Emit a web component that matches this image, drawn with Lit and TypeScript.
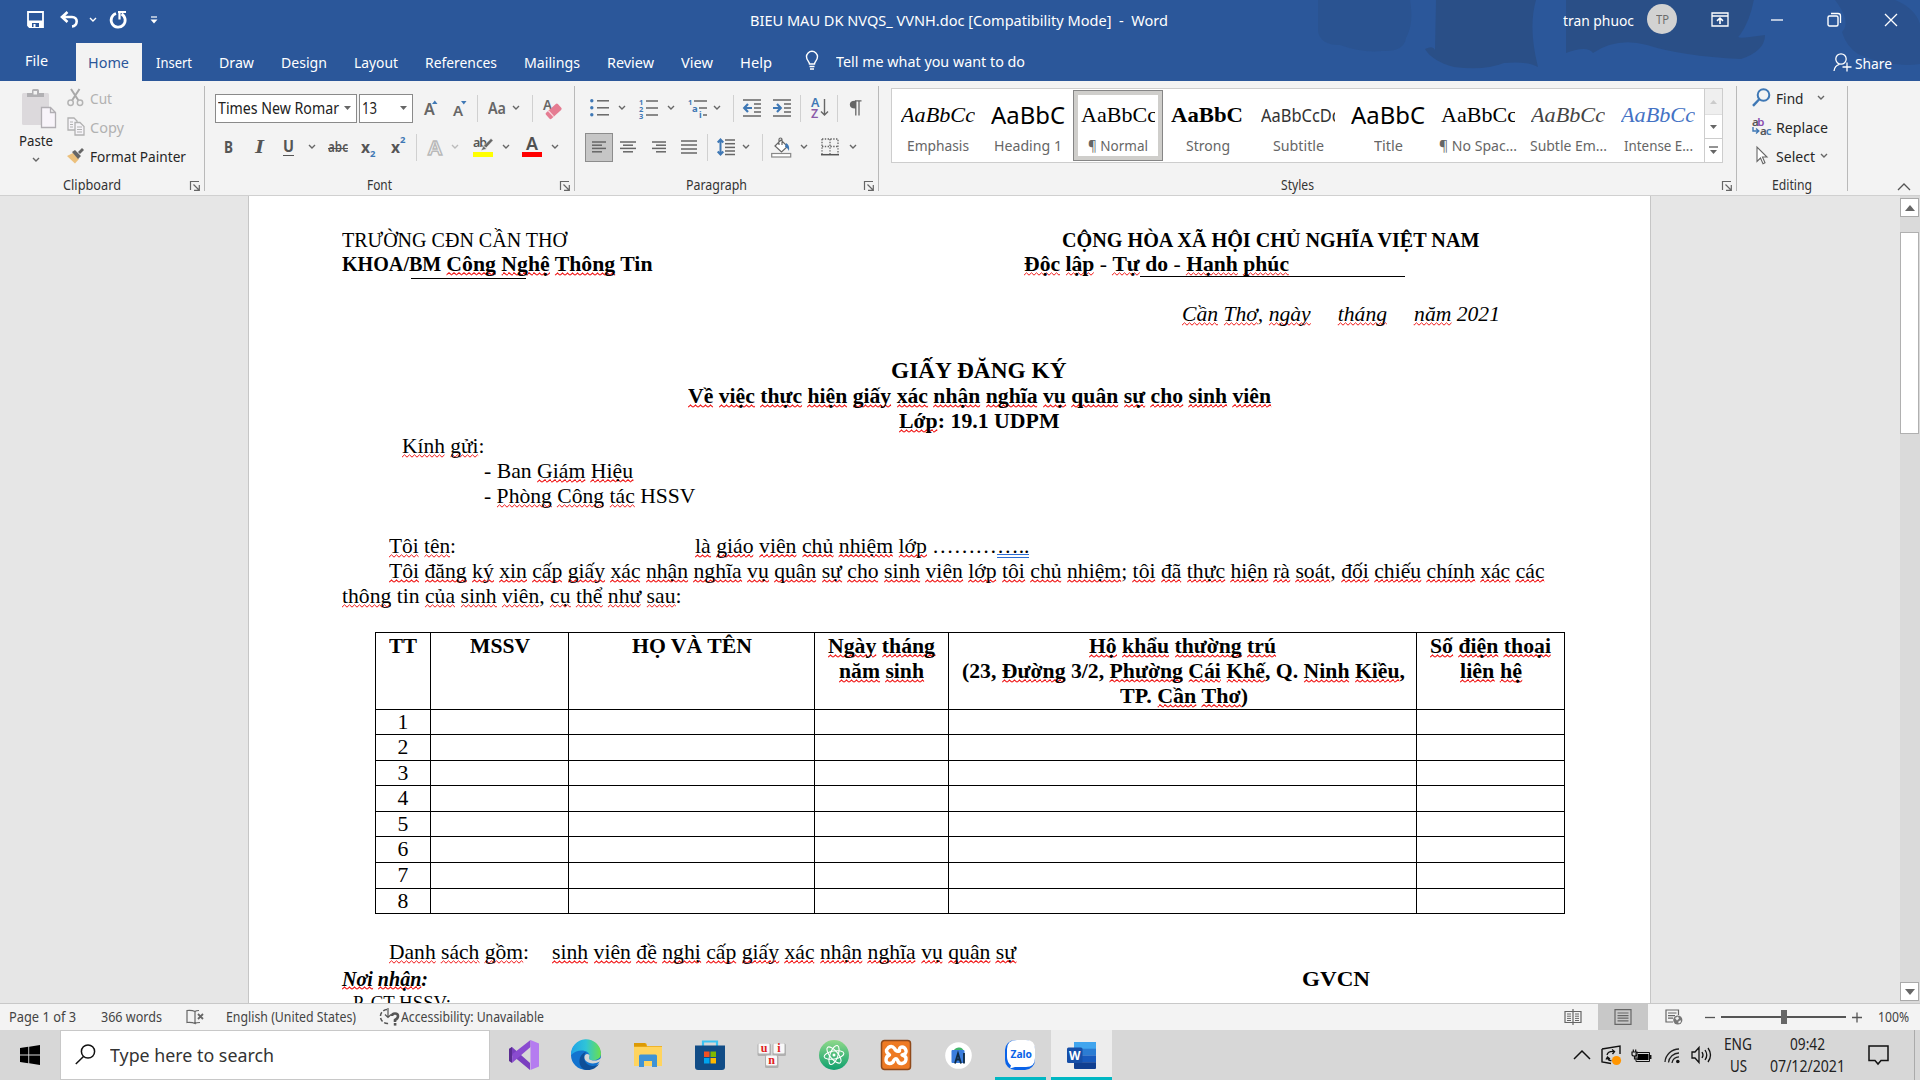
import { LitElement, html, css, svg } from "lit";
import { customElement, property, query } from "lit/decorators.js";

/** Text that is condensed or expanded horizontally to an exact width. */
@customElement("fit-text")
class FitText extends LitElement {
  @property({ type: Number }) w = 0;
  @query("span") inner!: HTMLSpanElement;
  static styles = css`
    :host { display: inline-block; white-space: pre; flex: none; }
    span { display: inline-block; transform-origin: 0 50%; white-space: pre; }
  `;
  updated() {
    requestAnimationFrame(() => {
      const s = this.inner;
      s.style.transform = "none";
      this.style.width = "auto";
      const natural = s.offsetWidth ? s.getBoundingClientRect().width : 0;
      this.style.width = this.w + "px";
      if (natural) s.style.transform = `scaleX(${this.w / natural})`;
    });
  }
  render() {
    return html`<span><slot></slot></span>`;
  }
}

const t = (w: number, content: unknown, cls = "") => html`<fit-text class=${cls} .w=${w}>${content}</fit-text>`;

/** Words in [brackets] get the red spelling squiggle. */
const sq = (s: string) =>
  s.split(/(\[[^\]]*\])/).map((p) => (p.startsWith("[") ? html`<span class="sp">${p.slice(1, -1)}</span>` : p));

const icon = (w: number, h: number, body: unknown, cls = "") =>
  html`<svg class=${cls} width=${w} height=${h} viewBox="0 0 ${w} ${h}" fill="none">${body}</svg>`;

const chev = (cls = "chev") => icon(8, 6, svg`<path d="M1 1l3 3 3-3" stroke="currentColor" stroke-width="1.4"/>`, cls);
const sep = html`<i class="sep"></i>`;
const tri = icon(7, 4, svg`<path d="M0 0h7l-3.500 4z" fill="#666"/>`);
const launcher = icon(10, 10, svg`<path d="M.5 9V.5H9M3.500 3.500l5 5M9.300 4v5.300H4" stroke="#666" stroke-width="1.200"/>`, "launch");

const lines = (rows: number[][]) => rows.map(([x1, x2, y]) => svg`<path d="M${x1} ${y}H${x2}" stroke="#666" stroke-width="1.500"/>`);

const I = {
  save: icon(17, 17, svg`<path d="M1 1h15v15H2.500L1 14.500z" stroke="#fff" stroke-width="1.800"/><path d="M1 9.500h15V16H1z" fill="#fff"/><path d="M5 12h7v4H5z" fill="#2b579a"/><path d="M6.500 13h2v3h-2z" fill="#fff"/>`),
  undo: icon(19, 17, svg`<path d="M7.500 1L2 6l5.500 5M2.500 6H12c6.500 0 6 9 0 9.500" stroke="#fff" stroke-width="2.600"/>`),
  redo: icon(18, 18, svg`<path d="M6 2.500A7 7 0 1 0 11.500 3" stroke="#fff" stroke-width="2.800"/><path d="M8 1h8M9.500 1v7.500" stroke="#fff" stroke-width="2.200"/>`),
  custom: icon(8, 8, svg`<path d="M1 1h6" stroke="#fff" stroke-width="1.200"/><path d="M0.500 3.500h7L4 7.500z" fill="#fff"/>`),
  ribbon: icon(18, 15, svg`<path d="M1 1h16v13H1zM1 4h16" stroke="#fff" stroke-width="1.300"/><path d="M9 12V6M6 8.800L9 6l3 2.800" stroke="#fff" stroke-width="1.600"/>`),
  min: icon(14, 14, svg`<path d="M1 7h12" stroke="#fff" stroke-width="1.300"/>`),
  restore: icon(15, 15, svg`<rect x="1" y="4" width="10" height="10" rx="1.500" stroke="#fff" stroke-width="1.400"/><path d="M4 1.500h7q2.500 0 2.500 2.500v7" stroke="#fff" stroke-width="1.300"/>`),
  close: icon(14, 14, svg`<path d="M1 1l12 12M13 1L1 13" stroke="#fff" stroke-width="1.300"/>`),
  share: icon(19, 19, svg`<circle cx="8" cy="6" r="5.200" stroke="#fff" stroke-width="1.300"/><path d="M1 18c.5-4 2.500-6 5.500-6.700M14 9.500v9M9.500 14h9" stroke="#fff" stroke-width="1.300"/>`),
  bulb: icon(14, 20, svg`<path d="M4.500 13c0-2.500-3-3.500-3-7.200a5.500 5.500 0 0 1 11 0C12.500 9.500 9.500 10.500 9.500 13zM4.500 15.500h5M5 18h4" stroke="#fff" stroke-width="1.400"/>`),
  paste: icon(36, 40, svg`<rect x="1" y="4" width="27" height="32" rx="1.500" fill="#dcd9dc"/><path d="M6 8V4h5V1.500Q11 0 12.500 0h4Q18 0 18 1.500V4h5v4z" fill="#b1b0b3"/><rect x="12.500" y="2" width="3.500" height="3.500" fill="#f3f3f3"/><path d="M20.500 18.500h9l5 5v15h-14zM29.500 18.500v5h5" fill="#f8f4fa" stroke="#b1aeb3" stroke-width="1.300"/>`),
  cut: icon(17, 19, svg`<path d="M4 1l7.500 11.500M12.500 1L5 12.500" stroke="#a9a9a9" stroke-width="2"/><circle cx="3.600" cy="14.700" r="2.700" stroke="#b4b4b4" stroke-width="1.500"/><circle cx="13" cy="14.700" r="2.700" stroke="#b4b4b4" stroke-width="1.500"/>`),
  copy: icon(18, 19, svg`<path d="M1 1h6l3 3v9H1z" fill="#f6f4f8" stroke="#b1b1b1" stroke-width="1.300"/><path d="M3 5h3M3 7.500h3M3 10h3" stroke="#b1b1b1"/><path d="M8 5.500h5l4 4V18H8z" fill="#f6f4f8" stroke="#b1b1b1" stroke-width="1.300"/><path d="M10 10h5M10 12.500h5M10 15h5" stroke="#b1b1b1"/>`),
  painter: icon(18, 17, svg`<path d="M0 9l6-3 6 6-4 4.500z" fill="#ecc07c"/><path d="M5 5l3-2 6 6-3 3zM11 5l4-4 2 2-4 4z" fill="#666"/>`),
  grow: icon(15, 18, svg`<text x="0" y="16" font-size="16" font-weight="600" textLength="10.500" fill="#666">A</text><path d="M8 5l2.800-3.500L13.500 5z" fill="#3f78b5"/>`),
  shrink: icon(16, 18, svg`<text x="0" y="17" font-size="15" font-weight="600" textLength="10.500" fill="#666">A</text><path d="M8 2l2.800 3.500L13.500 2z" fill="#3f78b5"/>`),
  eraser: icon(19, 22, svg`<text x="0" y="12.500" font-size="13.500" font-weight="600" textLength="8.500" fill="#666">A</text><g transform="rotate(-42 11 14)"><rect x="2.500" y="10" width="16" height="8" rx="1.500" fill="#e57c92"/><path d="M7 10v8" stroke="#f8d5dc" stroke-width="1.300"/></g>`),
  outlineA: icon(17, 20, svg`<text x="1" y="17.500" font-size="20" textLength="14" lengthAdjust="spacingAndGlyphs" fill="#f9f9f9" stroke="#b9b9b9" stroke-width="1.400" font-weight="600">A</text>`),
  highlight: icon(22, 22, svg`<text x="0" y="10.500" font-size="12.500" font-weight="600" textLength="14" fill="#555">ab</text><path d="M8 14.500l2.500-4.500 3 3zM11 9.500l7-7 2 2-7 7.500z" fill="#666" stroke="#f3f3f3" stroke-width=".5"/><rect x="0" y="16" width="20" height="5" fill="#ffff00"/>`),
  fontColor: icon(21, 22, svg`<text x="4" y="13.500" font-size="17.500" font-weight="600" textLength="12" lengthAdjust="spacingAndGlyphs" fill="#505050">A</text><rect x="0" y="16" width="20" height="5" fill="#ff0000"/>`),
  bullets: icon(19, 18, svg`${[1.8, 8.8, 15.8].map((y) => svg`<circle cx="1.800" cy=${y} r="1.700" fill="#3f78b5"/>`)}${lines([[7, 19, 1.8], [7, 19, 8.8], [7, 19, 15.8]])}`),
  numbers: icon(19, 21, svg`${["1", "2", "3"].map((n, i) => svg`<text x="0" y=${6.5 + i * 7} font-size="7.500" font-weight="700" fill="#3f78b5">${n}</text>`)}${lines([[7, 19, 3], [7, 19, 10], [7, 19, 17]])}`),
  multi: icon(19, 21, svg`<text x="0" y="6.500" font-size="7.500" font-weight="700" fill="#3f78b5">1</text><text x="4" y="13.500" font-size="9.500" font-weight="700" fill="#3f78b5">a</text><text x="11" y="20" font-size="9" font-weight="700" fill="#3f78b5">i</text>${lines([[6, 19, 3], [11, 19, 10], [15, 19, 17]])}`),
  outdent: icon(19, 18, svg`${lines([[0, 18, 1], [11, 18, 5], [11, 18, 9], [11, 18, 13], [0, 18, 17]])}<path d="M1 9h8M5 5L1.200 9 5 13" stroke="#3f78b5" stroke-width="2.200"/>`),
  indent: icon(19, 18, svg`${lines([[0, 18, 1], [11, 18, 5], [11, 18, 9], [11, 18, 13], [0, 18, 17]])}<path d="M0 9h8M4 5l3.800 4L4 13" stroke="#3f78b5" stroke-width="2.200"/>`),
  sort: icon(18, 22, svg`<text x="0" y="10" font-size="12.500" font-weight="600" fill="#3f78b5">A</text><text x="0" y="20.500" font-size="12.500" font-weight="600" fill="#8a5aa8">Z</text><path d="M13.500 2v16M10 14.500l3.500 3.500 3.500-3.500" stroke="#666" stroke-width="1.400"/>`),
  pilcrow: icon(13, 16, svg`<path d="M6 .8h6.500M6.800 1v14.500M10 1v14.500" stroke="#666" stroke-width="1.300"/><path d="M6 8.500Q.8 8.500.8 4.600T6 .8h1v7.700z" fill="#666"/>`),
  left: icon(14, 12, lines([[0, 14, 1], [0, 10, 4.2], [0, 14, 7.4], [0, 10, 10.8]])),
  center: icon(17, 12, lines([[0, 16, 1], [3, 13, 4.2], [0, 16, 7.4], [3, 13, 10.8]])),
  right: icon(15, 12, lines([[0, 14, 1], [4, 14, 4.2], [0, 14, 7.4], [4, 14, 10.8]])),
  justify: icon(17, 15, lines([[0, 16, 1], [0, 16, 5], [0, 16, 9], [0, 16, 13]])),
  spacing: icon(18, 20, svg`<path d="M3.500 2.500v15M.7 5.500l2.800-3 2.800 3M.7 14.500l2.800 3 2.800-3" stroke="#3f78b5" stroke-width="2"/>${lines([[8, 18, 3], [8, 18, 6.7], [8, 18, 10.4], [8, 18, 14], [8, 18, 17.5]])}`),
  fill: icon(21, 21, svg`<path d="M4 9l6-6 6.500 6.500-6 5.500zM8 8V2.500a1.500 1.500 0 0 1 3 0V8" stroke="#666" stroke-width="1.200" fill="#fff"/><path d="M15 6q4 2 3 8-2-4-4-4z" fill="#3f78b5"/><rect x=".7" y="16.500" width="19" height="3.500" fill="#fff" stroke="#888" stroke-width="1.200"/>`),
  borders: icon(18, 18, svg`<path d="M1 1h16v15M1 1v15M9 1v15M1 8.500h16" stroke="#666" stroke-width="1.300" stroke-dasharray="1.400 1.400"/><path d="M0 16.700h18" stroke="#555" stroke-width="1.500"/>`),
  find: icon(19, 19, svg`<circle cx="11.500" cy="7" r="5.800" stroke="#3f78b5" stroke-width="2"/><path d="M7.500 11L1 17.800" stroke="#3f78b5" stroke-width="2.400"/>`),
  replace: icon(20, 19, svg`<text x="0" y="9" font-size="11.500" font-weight="600" textLength="12.500" fill="#555">a<tspan fill="#8a4fb0">b</tspan></text><text x="8" y="18" font-size="11.500" font-weight="600" textLength="11.500" fill="#555">a<tspan fill="#3f78b5">c</tspan></text><path d="M1 10v4h5M4 11.500L6.800 14 4 16.500" stroke="#3f78b5" stroke-width="1.400"/>`),
  select: icon(12, 19, svg`<path d="M1 1v14.500l3.500-3.500 2.500 5.700 2-1L6.500 11H11z" fill="#fff" stroke="#666" stroke-width="1.100"/>`, "arrow"),
  collapse: icon(14, 8, svg`<path d="M1 7l6-6 6 6" stroke="#555" stroke-width="1.300"/>`),
  proof: icon(19, 17, svg`<path d="M9 2.500Q6 1 1 1.500v12q5-.5 8 1zM9 2.500q1-1 4-1M9 14.500q1-1 5-1" stroke="#666" stroke-width="1.200"/><path d="M12 5l5 5M17 5l-5 5" stroke="#666" stroke-width="1.800"/>`),
  access: icon(20, 18, svg`<path d="M7 1.500A7 7 0 1 0 10 15" stroke="#555" stroke-width="1.500" stroke-dasharray="4 2"/><path d="M8 0v9M5 6.500l3 3 3-3" stroke="#555" stroke-width="1.200"/><path d="M12 8q0-2.500 3-2.500t3 2.500-3 4v2" stroke="#555" stroke-width="2.600"/><rect x="13.800" y="15" width="2.600" height="2.600" fill="#555"/>`),
  read: icon(18, 16, svg`<path d="M9 2.500H1v11h8zM9 2.500h8v11H9zM9 0v16" stroke="#666" stroke-width="1.200"/>${[5, 7.2, 9.4, 11.5].map((y) => svg`<path d="M3 ${y}h4M11 ${y}h4" stroke="#666"/>`)}`),
  print: icon(18, 16, svg`<path d="M1 .7h16v14.600H1zM3.500 4h11M3.500 6.600h11M3.500 9.200h11M3.500 11.800h11" stroke="#666" stroke-width="1.200"/>`),
  web: icon(18, 16, svg`<path d="M13.500 6V1H1v12h7M3 4h8.500M3 6.600h7M3 9.200h5" stroke="#666" stroke-width="1.200"/><circle cx="12.800" cy="11" r="4.600" fill="#777"/><path d="M10 9l3-1.500 1 2-2 2zM13 13l2.500-2 .5 2-2 1.500z" fill="#eee"/>`),
  win: icon(20, 20, svg`<path d="M0 3l8.300-1.200v7.700H0zM9.200 1.700L20 0v9.500H9.200zM0 10.400h8.300v7.800L0 17zM9.200 10.400H20V20L9.200 18.300z" fill="#000"/>`),
  search: icon(21, 21, svg`<circle cx="13" cy="7.500" r="6.600" stroke="#111" stroke-width="1.500"/><path d="M8.500 12.500L.8 20" stroke="#111" stroke-width="1.500"/>`),
  vs: icon(30, 30, svg`<path d="M0 9l3-2 18 16v7L3.500 15.500V21L0 20z" fill="#7a3fc0"/><path d="M0 9l3-2v16l-3-2z" fill="#5b2d91"/><path d="M3 23L21.500 7V0L3.500 14z" fill="#8a4bd0"/><path d="M21.500 0L30 3.500v23L21.500 30z" fill="#b57cf0"/>`),
  edge: icon(30, 30, svg`<defs><linearGradient id="e1" x1="0" x2="1"><stop offset="0" stop-color="#1fa4e8"/><stop offset=".5" stop-color="#2fc4d8"/><stop offset="1" stop-color="#6be04c"/></linearGradient></defs><circle cx="15" cy="15" r="15" fill="#1273cf"/><path d="M0 15A15 15 0 0 1 30 13.500C30 19 25 21 20 20c-3-.7-1.500-2-1.500-4C18.500 10 7 8 0 15z" fill="url(#e1)"/><path d="M15 12c-4 4-2 13 6 14 3 .4 6-1 7.500-3C26 28 20 31 14 29.800 6 27 7 14 15 12z" fill="#0f4f98"/><path d="M18.500 15c-4-3.500-7 2-3.500 6 3 3 9 3 13 1l2-1.500V18c-3 3-7 3-10 2-3-.7-1.500-2-1.500-5z" fill="#d6d6d6"/>`),
  folder: icon(28, 26, svg`<path d="M0 2Q0 1 1 1h10q2 0 2 3H28v20H0z" fill="#f0b429"/><path d="M0 1h11l2 3.500H0z" fill="#dc9a05"/><rect x="0" y="5" width="28" height="19" fill="#ffd45e"/><path d="M5 25V14q0-1.500 1.500-1.500h15Q23 12.500 23 14v11h-5v-6h-8v6z" fill="#3f93d6"/>`),
  store: icon(30, 30, svg`<path d="M8 6V1.500h14V6" stroke="#3cc3f3" stroke-width="2.200"/><path d="M0 5.500h30V27q0 3-3 3H3q-3 0-3-3z" fill="#114c86"/><path d="M9 11.500h5.500V17H9z" fill="#f25022"/><path d="M15.500 11.500H21V17h-5.500z" fill="#7fba00"/><path d="M9 18h5.500v5.500H9z" fill="#00a4ef"/><path d="M15.500 18H21v5.500h-5.500z" fill="#ffb900"/>`),
  unikey: icon(30, 28, svg`${([["u", 0, 2], ["i", 15, 2], ["n", 7.5, 14]] as [string, number, number][]).map(([c, x, y]) => svg`<g transform="translate(${x} ${y})"><rect x=".5" y=".5" width="13.500" height="12.500" rx="1.500" fill="#b0b0b0"/><rect x="1.500" y=".5" width="11" height="10" rx="1" fill="#f8f8f8"/><text x="7" y="8.500" text-anchor="middle" font-size="12" font-weight="700" fill="#e02020" font-family="Liberation Serif, serif">${c}</text></g>`)}`),
  atom: icon(30, 30, svg`<defs><linearGradient id="a1" x1="0" x2="0" y1="0" y2="1"><stop offset="0" stop-color="#8fd98a"/><stop offset="1" stop-color="#0fa06e"/></linearGradient></defs><circle cx="15" cy="15" r="15" fill="url(#a1)"/><g stroke="#fff" stroke-width="1.100"><ellipse cx="15" cy="15" rx="4" ry="10" transform="rotate(20 15 15)"/><ellipse cx="15" cy="15" rx="4" ry="10" transform="rotate(-40 15 15)"/><ellipse cx="15" cy="15" rx="4" ry="10" transform="rotate(80 15 15)"/></g><circle cx="15" cy="15" r="1.500" fill="#fff"/>`),
  xampp: icon(30, 30, svg`<rect x=".5" y=".5" width="29" height="29" rx="3" fill="#ee7a24" stroke="#8f4a1c" stroke-width="1.500"/><path d="M7.500 7.500Q11 5 13.500 8.500 15 12 18.500 11 18 7 21 7t4 3.500-4 4.500q4.500 1 4 4.500t-4 4-4.500-3.500q-1.500-2.500-3.500 0-1 3.500-4.500 3.500T5 20q0-4 3.500-5Q5 12.500 5.500 10z" stroke="#fff" stroke-width="3.400" stroke-linejoin="round"/>`),
  android: icon(27, 27, svg`<circle cx="13.500" cy="13.500" r="13.300" fill="#fff"/><path d="M8 10q1-4 5.500-4.500T19 10z" fill="#3fb56b"/><rect x="6.500" y="8" width="13" height="13" rx="1" fill="#3b7ddd"/><path d="M10 21.500l3-10 3 10M11.500 17.500h3.500M19 11v10.500" stroke="#102a43" stroke-width="1.800"/>`),
  zalo: icon(31, 31, svg`<rect x="0" y="0" width="30" height="30" rx="10" fill="#0a63e8"/><path d="M12 0h9q9 0 9 9v9q0 9-9 9H10l-5 1.500 1-3Q2 22 2 17V9q0-9 10-9z" fill="#fff"/><text x="5.500" y="17.500" font-size="10.500" font-weight="700" textLength="21.500" lengthAdjust="spacingAndGlyphs" fill="#0a63e8">Zalo</text>`),
  word: icon(30, 29, svg`<path d="M7 1h22v7H7z" fill="#41a5ee"/><path d="M7 7.700h22v7H7z" fill="#2b7cd3"/><path d="M7 14.500h22v7H7z" fill="#185abd"/><path d="M7 21.200h22V27q0 1-1 1H8q-1 0-1-1z" fill="#103f91"/><rect x="0" y="6.500" width="15.500" height="15.500" rx="1.500" fill="#164fa8"/><text x="2" y="18.500" font-size="12.500" font-weight="700" textLength="11.500" lengthAdjust="spacingAndGlyphs" fill="#fff">W</text>`),
  up: icon(18, 10, svg`<path d="M1 9l8-8 8 8" stroke="#111" stroke-width="1.500"/>`),
  sync: icon(21, 21, svg`<path d="M1 4l18-3v8M1 4v13l9 1.500" stroke="#111" stroke-width="1.400"/><path d="M6 10q1-4 7-3.500M11 4.500l2.500 2L11.500 9M13.500 11M5 14.500l1.500-2.500L9 14M6.500 13q1 3 4 2.500" stroke="#111" stroke-width="1.300"/><circle cx="15.500" cy="15.500" r="4.600" fill="#ff9500"/>`),
  battery: icon(21, 15, svg`<path d="M1 4h5v2.500Q6 8 3.500 8T1 6.500zM2.300 4V1.500M4.700 4V1.500M3.500 8v3H6" stroke="#111" stroke-width="1.200"/><path d="M5 4.500h13.500v9H5z" stroke="#111"/><path d="M7 6h10.500v6H6z" fill="#000"/><path d="M19.700 7v4" stroke="#111" stroke-width="1.500"/>`),
  wifi: icon(17, 17, svg`<path d="M1 15A14 14 0 0 1 15 2M4.500 15.500A10.500 10.500 0 0 1 15 6M8 16a7 7 0 0 1 7-6.200" stroke="#222" stroke-width="1.300"/><circle cx="13.800" cy="14.500" r="1.800" fill="#111"/>`),
  sound: icon(21, 18, svg`<path d="M1 6h3l4-4.500v15L4 12H1zM11 6q2 3 0 6M14 4q3.500 5 0 10M17 2q5 7 0 14" stroke="#111" stroke-width="1.300"/>`),
  notif: icon(21, 21, svg`<path d="M1 1h19v14.500h-7L10 19l-3-3.500H1z" stroke="#111" stroke-width="1.500"/>`),
};

const TABS: [string, number][] = [["Insert", 36], ["Draw", 35], ["Design", 46], ["Layout", 44], ["References", 72], ["Mailings", 56], ["Review", 47], ["View", 32], ["Help", 32]];
const STYLES: [string, number, string, number, string][] = [
  ["AaBbCc", 74, "Emphasis", 62, "s-em"],
  ["AaBbC", 74, "Heading 1", 68, "s-h"],
  ["AaBbCc", 76, "¶ Normal", 60, "s-n on"],
  ["AaBbC", 72, "Strong", 44, "s-b"],
  ["AaBbCcDd", 81, "Subtitle", 51, "s-sub"],
  ["AaBbC", 74, "Title", 29, "s-h"],
  ["AaBbCc", 76, "¶ No Spac...", 78, "s-n"],
  ["AaBbCc", 74, "Subtle Em...", 77, "s-em s-grey"],
  ["AaBbCc", 74, "Intense E...", 69, "s-em s-blue"],
];

@customElement("app-root")
class AppRoot extends LitElement {
  static styles = css`
    :host { display: block; width: 1920px; height: 1080px; overflow: hidden; font: 14.5px "Noto Sans", "Open Sans", sans-serif; color: #262626; background: #e6e6e6; }
    * { box-sizing: border-box; }
    svg { display: block; flex: none; overflow: visible; }
    .app { display: flex; flex-direction: column; height: 1080px; }
    .grid { display: grid; align-items: center; justify-items: start; }

    .head { position: relative; height: 81px; background: #2b579a; color: #fff; flex: none; }
    .art { position: absolute; right: 0; top: 0; }
    .title, .tabs { position: relative; display: grid; align-items: center; justify-items: start; }
    .title { height: 40px; padding: 0 0 0 27px; grid-template-columns: 33px 29px 21px 40px 600px 813px 84px 64px 59px 57px 57px 30px; }
    .title svg { margin-top: -1px; }
    .avatar { width: 30px; height: 30px; border-radius: 50%; background: #d2d2d2; color: #6b6b6b; display: grid; place-items: center; font-size: 12.5px; margin-top: -2px; }
    .tabs { display: flex; height: 41px; font-size: 15.3px; }
    .tabs .file { width: 76px; padding: 0 0 1px 25px; }
    .tabs .home { width: 66px; height: 38px; margin-top: 3px; padding-right: 2px; background: #f3f3f3; color: #2b579a; display: grid; place-items: center; }
    .tabs .rest { display: flex; gap: 27px; margin-left: 14px; padding-top: 2px; }
    .tabs .bulb { margin: 0 17px 0 33px; }
    .tabs .share { display: flex; gap: 3px; align-items: center; margin: 4px 28px 0 auto; }

    .ribbon { display: flex; height: 115px; background: #f3f3f3; border-bottom: 1px solid #d0d0d0; flex: none; position: relative; }
    .bar { width: 1px; background: #b9b9b9; margin: 5px 0 4px; }
    .group { display: flex; flex-direction: column; height: 114px; }
    .g-clip { width: 204px; } .g-font { width: 369px; } .g-par { width: 303px; } .g-sty { width: 857px; } .g-edit { width: 110px; }
    .label { margin-top: auto; height: 19px; line-height: 18px; font-size: 13.8px; display: grid; grid-template-columns: 1fr 20px; justify-items: center; color: #333; }
    .g-edit .label { grid-template-columns: 1fr; }
    .launch { margin-top: 5px; justify-self: start; margin-left: 6px; }
    .chev { color: #666; }
    .sep { width: 1px; height: 27px; background: #d0d0d0; }
    .r1, .r2 { height: 29px; }
    .r1 { margin-top: 12.5px; } .r2 { margin-top: 10px; }

    .clip { display: grid; grid-template-columns: 67px 1fr; height: 90px; }
    .paste { display: flex; flex-direction: column; align-items: center; padding: 8px 0 0 5px; }
    .paste fit-text { margin: 1px 0 7px; height: 20px; line-height: 20px; font-size: 15px; }
    .paste svg:first-child { margin-left: 5px; }
    .cmds { display: grid; grid-template-rows: 29px 29px 29px; align-items: center; padding-top: 2px; font-size: 15px; }
    .cmds > div { display: grid; grid-template-columns: 22.5px auto; align-items: center; }
    .off { color: #b1b1b1; }

    .f1 { padding-left: 10px; grid-template-columns: 144px 65px 29px 24px 11px 24px 20px 11px 20px; }
    .combo { height: 29px; background: #fff; border: 1px solid #8a8a8a; display: flex; align-items: center; justify-content: space-between; padding: 0 5px 0 2px; font-size: 15.5px; color: #222; }
    .c-name { width: 142px; } .c-size { width: 54px; }
    .f2 { padding-left: 19px; grid-template-columns: 31px 28px 25px 20px 33px 30px 25px 11px 24px 22px 29px 20px 29px 10px; font-size: 16px; color: #555; }
    .bold { font-weight: 700; }
    .ital { font-family: "Liberation Serif", serif; font-style: italic; font-weight: 700; font-size: 19px; }
    .und { border-bottom: 1.5px solid #555; line-height: 17px; font-weight: 700; }
    .strike { font-weight: 600; font-size: 14px; line-height: 18px; background: linear-gradient(#555, #555) 0 10px / 100% 1.3px no-repeat; }
    .sub, .sup { display: flex; font-weight: 700; font-size: 16px; }
    .sub b, .sup b { font-size: 9.5px; color: #3f78b5; }
    .sub b { align-self: end; margin-bottom: -2px; } .sup b { align-self: start; margin-top: -3px; }
    .aa { color: #666; font-weight: 600; font-size: 15.5px; }
    .dim { color: #bbb; }

    .p1 { padding-left: 15px; grid-template-columns: 28px 21px 28px 21px 25px 20px 10px 30px 27px 11px 26px 12px 14px; }
    .p2 { padding-left: 10px; grid-template-columns: 35px 32px 29px 26px 10px 25px 20px 9px 29px 21px 28px 10px; }
    .sel { width: 28px; height: 29px; background: #c6c6c6; border: 1px solid #8c8c8c; display: grid; place-items: center; }

    .gallery { display: flex; margin: 7px 0 0 12px; width: 832px; height: 75px; border: 1px solid #cdcdcd; background: #fff; }
    .cards { display: grid; grid-template-columns: repeat(9, 90px); padding: 1px 0 0 1px; width: 811px; }
    .card { height: 71px; display: grid; grid-template-rows: 44px 20px; justify-items: center; overflow: hidden; color: #000; }
    .card .smp { width: 74px; height: 44px; overflow: hidden; line-height: 50px; }
    .card .nm { font-size: 14.5px; line-height: 23px; color: #666; }
    .card.on { outline: 1px solid #868686; outline-offset: -1px; box-shadow: inset 0 0 0 5px #cfcecb; }
    .s-em .smp { font: italic 22px/49px "Liberation Serif", serif; }
    .s-n .smp { font: 22px/49px "Liberation Serif", serif; }
    .s-b .smp { font: bold 22px/49px "Liberation Serif", serif; }
    .s-h .smp { font-size: 23.5px; line-height: 50px; }
    .s-sub .smp { font-size: 18px; line-height: 50px; color: #333; }
    .s-grey .smp { color: #444; } .s-blue .smp { color: #4472c4; }
    .gs { width: 18px; margin-left: 1px; border-left: 1px solid #cdcdcd; display: grid; grid-template-rows: 26px 24px 23px; }
    .gs > div { display: grid; place-items: center; border-bottom: 1px solid #cdcdcd; }
    .gs > div:first-child { background: #e6e6e6; opacity: .6; }
    .gs > div:last-child { border: 0; }

    .edits { display: grid; grid-template-rows: 29px 29px 29px; padding: 2px 0 0 15px; font-size: 15px; height: 90px; }
    .edits > div { display: grid; grid-template-columns: 23.5px 41px 10px; align-items: center; justify-items: start; }
    .arrow { margin-left: 4px; }
    .edits > div:nth-child(3) { grid-template-columns: 23.5px 44px 10px; }
    .collapse { margin: auto 9px 4px auto; }

    .work { height: 807px; display: flex; justify-content: space-between; overflow: hidden; flex: none; }
    .page { position: relative; width: 1403px; margin-left: 248px; background: #fff; border: 1px solid #c6c6c6; border-width: 0 1px; padding: 33px 0 0 93px; color: #000; font: 21.67px/25px "Liberation Serif", "Times New Roman", serif; }
    .ln { height: 25px; display: flex; white-space: pre; }
    .sp { background: url("data:image/svg+xml,%3Csvg xmlns='http://www.w3.org/2000/svg' width='5' height='4'%3E%3Cpath d='M0 3.2L2.500 .8L5 3.2' fill='none' stroke='%23f01818' stroke-width='1'/%3E%3C/svg%3E") 0 100% repeat-x; }
    .gm { box-shadow: inset 0 -1px #2b6cd4, inset 0 -3px #fff, inset 0 -4px #2b6cd4; }
    b { font-weight: 700; }
    .small { font-size: 20px; }
    .l1 { height: 22.5px; line-height: 22px; display: grid; grid-template-columns: 720px auto; font-size: 20px; }
    .l2 { display: grid; grid-template-columns: 682px auto; }
    .thin { font-weight: 400; }
    .date { font-style: italic; margin: 25px 0 30.5px 840px; }
    .t1 { height: 27px; line-height: 27px; font-size: 23.33px; padding-left: 549px; }
    .t2 { padding-left: 346px; } .t3 { padding-left: 557px; }
    .i60 { padding-left: 60px; } .i142 { padding-left: 141.5px; } .i48 { padding-left: 47px; }
    .gap { margin-top: 25px; }
    .me { display: grid; grid-template-columns: 306px 236.5px auto; }
    .rule { position: absolute; height: 1.3px; background: #000; }
    .rule.a { left: 162px; top: 81.500px; width: 115px; }
    .rule.b { left: 890.5px; top: 79.500px; width: 265px; }
    table { border-collapse: collapse; margin: 23px 0 0 33px; width: 1189px; table-layout: fixed; }
    td, th { border: 1.3px solid #000; padding: 0; vertical-align: top; text-align: center; font-weight: 700; }
    th { height: 76px; padding-top: 0.5px; line-height: 25px; }
    th fit-text { display: block; margin: 0 auto; height: 25px; }
    td { height: 25.600px; line-height: 24.600px; font-weight: 400; }
    .c1 { width: 55px; } .c2 { width: 138px; } .c3 { width: 246px; } .c4 { width: 134px; } .c5 { width: 468px; } .c6 { width: 148px; }
    .sum { margin-top: 26px; display: grid; grid-template-columns: 162.500px auto; }
    .ends { margin-top: 1.5px; height: 24px; display: grid; grid-template-columns: 960px auto; }
    .cc { font-size: 18.300px; height: 22px; line-height: 24px; }

    .scroll { width: 20px; background: #dadada; display: flex; flex-direction: column; align-items: center; padding: 2px 1px 2px 0; }
    .btn { width: 19px; height: 19px; background: #fff; border: 1px solid #aaa; display: grid; place-items: center; }
    .thumb { width: 19px; height: 202px; margin-top: 15px; background: #fff; border: 1px solid #b0b0b0; }
    .scroll .last { margin-top: auto; }

    .status { height: 27px; background: #f3f3f3; border-top: 1px solid #c8c8c8; flex: none; padding-left: 9px; font-size: 13.8px; color: #444; grid-template-columns: 92px 85px 40px 154px 21px 1163px 34px 67px 40px 16px 131px 26px auto; }
    .status fit-text { margin-top: -1px; }
    .view { width: 50px; height: 26px; background: #c8c8c8; display: grid; place-items: center; }
    .slider { width: 125px; height: 26px; display: flex; align-items: center; }
    .slider i { height: 1.5px; background: #555; flex: 60; }
    .slider i + b { width: 6px; height: 14px; background: #666; } .slider b + i { flex: 59; }

    .task { height: 50px; background: #d7d7d7; flex: none; display: flex; color: #222; }
    .start { width: 60px; display: grid; place-items: center; }
    .find { width: 430px; height: 50px; background: #fff; border: 1px solid #c8c8c8; display: flex; align-items: center; gap: 14px; padding: 0 0 2px 14px; font-size: 18.700px; color: #333; }
    .apps { display: grid; align-items: center; grid-template-columns: repeat(8, 62px) 62px 61px; margin-left: 3px; width: 622px; padding-left: 0; }
    .apps > div { height: 50px; display: grid; place-items: center; border-bottom: 3px solid transparent; padding-top: 3px; }
    .apps .run { border-color: #00b7c3; width: 51px; margin-left: 6px; }
    .apps .act { border-color: #00b7c3; background: #ededed; margin-left: 0; width: 61px; }
    .tray { margin-left: auto; display: grid; align-items: center; justify-items: start; width: 347px; grid-template-columns: 28px 30px 33px 27px 33px 45px 99px 45px 1fr; }
    .two { display: grid; justify-items: center; font-size: 15.500px; line-height: 22px; margin-top: -1px; }
    .two + .two { margin-left: 1px; }
    .edge { width: 1px; height: 50px; background: #aaa; justify-self: end; margin-right: 5px; }
  `;

  private ribbon() {
    return html`<div class="ribbon">
      <div class="group g-clip">
        <div class="clip">
          <div class="paste">${I.paste}${t(34, "Paste")}${chev()}</div>
          <div class="cmds">
            <div class="off">${I.cut}${t(22, "Cut")}</div>
            <div class="off">${I.copy}${t(34, "Copy")}</div>
            <div>${I.painter}${t(96, "Format Painter")}</div>
          </div>
        </div>
        <div class="label">${t(58, "Clipboard")}${launcher}</div>
      </div><div class="bar"></div>
      <div class="group g-font">
        <div class="grid r1 f1">
          <div class="combo c-name">${t(121, "Times New Romar")}${tri}</div>
          <div class="combo c-size">${t(15, "13")}${tri}</div>
          ${I.grow}${I.shrink}${sep}${t(18, "Aa", "aa")}${chev()}${sep}${I.eraser}
        </div>
        <div class="grid r2 f2">
          ${t(9, "B", "bold")}${t(9, "I", "ital")}${t(11, "U", "und")}${chev()}${t(20, "abc", "strike")}
          <span class="sub">${t(9, "x")}<b>2</b></span><span class="sup">${t(9, "x")}<b>2</b></span>${sep}
          ${I.outlineA}${chev("dim")}${I.highlight}${chev()}${I.fontColor}${chev()}
        </div>
        <div class="label">${t(25, "Font")}${launcher}</div>
      </div><div class="bar"></div>
      <div class="group g-par">
        <div class="grid r1 p1">${I.bullets}${chev()}${I.numbers}${chev()}${I.multi}${chev()}${sep}${I.outdent}${I.indent}${sep}${I.sort}${sep}${I.pilcrow}</div>
        <div class="grid r2 p2"><div class="sel">${I.left}</div>${I.center}${I.right}${I.justify}${sep}${I.spacing}${chev()}${sep}${I.fill}${chev()}${I.borders}${chev()}</div>
        <div class="label">${t(61, "Paragraph")}${launcher}</div>
      </div><div class="bar"></div>
      <div class="group g-sty">
        <div class="gallery">
          <div class="cards">${STYLES.map(([s, w, n, nw, c]) => html`<div class="card ${c}"><div class="smp">${t(w, s)}</div>${t(nw, n, "nm")}</div>`)}</div>
          <div class="gs"><div>${icon(7, 4, svg`<path d="M0 4h7L3.500 0z" fill="#aaa"/>`)}</div><div>${tri}</div><div>${icon(9, 9, svg`<path d="M0 1h9" stroke="#666" stroke-width="1.400"/><path d="M1 4h7L4.500 8z" fill="#666"/>`)}</div></div>
        </div>
        <div class="label">${t(33, "Styles")}${launcher}</div>
      </div><div class="bar"></div>
      <div class="group g-edit">
        <div class="edits">
          <div>${I.find}${t(27.5, "Find")}${chev()}</div>
          <div>${I.replace}${t(52, "Replace")}</div>
          <div>${I.select}${t(39, "Select")}${chev()}</div>
        </div>
        <div class="label">${t(40, "Editing")}</div>
      </div><div class="bar"></div>
      <div class="collapse">${I.collapse}</div>
    </div>`;
  }

  private page() {
    return html`<div class="page">
      <div class="ln l1">${t(225, "TRƯỜNG CĐN CẦN THƠ")}${t(417.5, html`<b>CỘNG HÒA XÃ HỘI CHỦ NGHĨA VIỆT NAM</b>`)}</div>
      <div class="ln l2">${t(310.5, html`<b><span class="small">KHOA/BM </span>${sq("[Công] [Nghệ] [Thông] Tin")}</b>`)}${t(265, html`<b>${sq("[Độc] [lập]")}<span class="thin"> - </span>${sq("[Tự] do")}<span class="thin"> - </span>${sq("[Hạnh] [phúc]")}</b>`)}</div>
      <div class="ln date">${t(318, sq("[Cần] [Thơ], [ngày]     [tháng]     [năm] 2021"))}</div>
      <div class="ln t1">${t(175.5, html`<b>GIẤY ĐĂNG KÝ</b>`)}</div>
      <div class="ln t2">${t(583, html`<b>${sq("[Về] [việc] [thực] [hiện] [giấy] [xác] [nhận] [nghĩa] [vụ] [quân] [sự] [cho] [sinh] [viên]")}</b>`)}</div>
      <div class="ln t3">${t(160.5, html`<b>${sq("[Lớp]: 19.1 UDPM")}</b>`)}</div>
      <div class="ln i60">${t(82.5, sq("[Kính] [gửi]:"))}</div>
      <div class="ln i142">${t(149, sq("- Ban [Giám] [Hiệu]"))}</div>
      <div class="ln i142">${t(211.5, sq("- [Phòng] [Công] [tác] HSSV"))}</div>
      <div class="ln gap i48 me">${t(67, sq("[Tôi] [tên]:"))}${t(232, sq("[là] [giáo] [viên] [chủ] [nhiệm] [lớp]"))}${t(97.5, html`………<span class="gm">…..</span>`)}</div>
      <div class="ln i48">${t(1155.5, sq("[Tôi] [đăng] [ký] [xin] [cấp] [giấy] [xác] [nhận] [nghĩa] [vụ] [quân] [sự] [cho] [sinh] [viên] [lớp] [tôi] [chủ] [nhiệm]; [tôi] [đã] [thực] [hiện] [rà] [soát], [đối] [chiếu] [chính] [xác] [các]"))}</div>
      <div class="ln">${t(339.5, sq("[thông] tin [của] [sinh] [viên], [cụ] [thể] [như] [sau]:"))}</div>
      <table>
        <tr>
          <th class="c1">${t(28, "TT")}</th>
          <th class="c2">${t(60, "MSSV")}</th>
          <th class="c3">${t(120, "HỌ VÀ TÊN")}</th>
          <th class="c4">${t(107, sq("[Ngày] [tháng]"))}${t(85, sq("[năm] [sinh]"))}</th>
          <th class="c5">${t(187, sq("[Hộ] [khẩu] [thường] [trú]"))}${t(443, sq("(23, [Đường] 3/2, [Phường] [Cái] [Khế], Q. [Ninh] [Kiều],"))}${t(128, sq("TP. [Cần] [Thơ])"))}</th>
          <th class="c6">${t(121, sq("[Số] [điện] [thoại]"))}${t(62, sq("[liên] [hệ]"))}</th>
        </tr>
        ${[1, 2, 3, 4, 5, 6, 7, 8].map((n) => html`<tr><td>${n}</td><td></td><td></td><td></td><td></td><td></td></tr>`)}
      </table>
      <div class="ln sum i48">${t(140, sq("[Danh] [sách] [gồm]:"))}${t(464, sq("[sinh] [viên] [đề] [nghị] [cấp] [giấy] [xác] [nhận] [nghĩa] [vụ] [quân] [sự]"))}</div>
      <div class="ln ends">${t(86, html`<b class="small"><i>${sq("[Nơi] [nhận]:")}</i></b>`)}${t(68, html`<b>GVCN</b>`)}</div>
      <div class="ln cc">${t(109, "- P. CT HSSV;")}</div>
      <i class="rule a"></i><i class="rule b"></i>
    </div>`;
  }

  render() {
    return html`<div class="app">
      <div class="head">
        <svg class="art" width="620" height="81" viewBox="1300 0 620 81" fill="#2a4f87">
          <path d="M1318 0h92q4 24-4 38-2 14-24 13-20 2-42-6-20 0-22-14z" opacity=".5"/>
          <path d="M1436 0h100q-8 28 2 67-10-6-34-4-20 8-50 4-22-6-29-18 8-4 10 1z"/>
          <path d="M1566 0h188q-4 22-14 36-6 4 10 2l15-2q0 16-24 24-60-3-94-14-30-8-54 8-6-8-27 0z" transform="translate(0 -1)"/>
          <path d="M1835 0h60q20 8 25 24v40q-30 4-62-10-12-8-16-22 10-10-7-32z" opacity=".65"/>
        </svg>
        <div class="title">
          ${I.save}${I.undo}${chev("w")}${I.redo}${I.custom}
          ${t(418, "BIEU MAU DK NVQS_ VVNH.doc [Compatibility Mode]  -  Word")}
          ${t(71, "tran phuoc")}<div class="avatar">${t(13, "TP")}</div>${I.ribbon}${I.min}${I.restore}${I.close}
        </div>
        <div class="tabs">
          <div class="file">${t(23, "File")}</div>
          <div class="home">${t(41, "Home")}</div>
          <div class="rest">${TABS.map(([n, w]) => t(w, n))}</div>
          <div class="bulb">${I.bulb}</div>${t(189, "Tell me what you want to do")}
          <div class="share">${I.share}${t(37, "Share")}</div>
        </div>
      </div>
      ${this.ribbon()}
      <div class="work">
        ${this.page()}
        <div class="scroll">
          <div class="btn">${icon(10, 6, svg`<path d="M0 6h10L5 0z" fill="#666"/>`)}</div>
          <div class="thumb"></div>
          <div class="btn last">${icon(10, 6, svg`<path d="M0 0h10L5 6z" fill="#666"/>`)}</div>
        </div>
      </div>
      <div class="grid status">
        ${t(67, "Page 1 of 3")}${t(61, "366 words")}${I.proof}${t(130, "English (United States)")}${I.access}${t(143, "Accessibility: Unavailable")}
        ${I.read}<div class="view">${I.print}</div>${I.web}
        ${icon(11, 11, svg`<path d="M0 5.500h10" stroke="#555" stroke-width="1.300"/>`)}
        <div class="slider"><i></i><b></b><i></i></div>
        ${icon(11, 11, svg`<path d="M0 5.500h10M5 .5v10" stroke="#555" stroke-width="1.300"/>`)}
        ${t(31, "100%")}
      </div>
      <div class="task">
        <div class="start">${I.win}</div>
        <div class="find">${I.search}${t(164, "Type here to search")}</div>
        <div class="apps">
          ${[I.vs, I.edge, I.folder, I.store, I.unikey, I.atom, I.xampp, I.android].map((i) => html`<div>${i}</div>`)}
          <div class="run">${I.zalo}</div><div class="act">${I.word}</div>
        </div>
        <div class="tray">
          ${I.up}${I.sync}${I.battery}${I.wifi}${I.sound}
          <div class="two">${t(28, "ENG")}${t(17, "US")}</div>
          <div class="two">${t(35, "09:42")}${t(75, "07/12/2021")}</div>
          ${I.notif}<i class="edge"></i>
        </div>
      </div>
    </div>`;
  }
}
